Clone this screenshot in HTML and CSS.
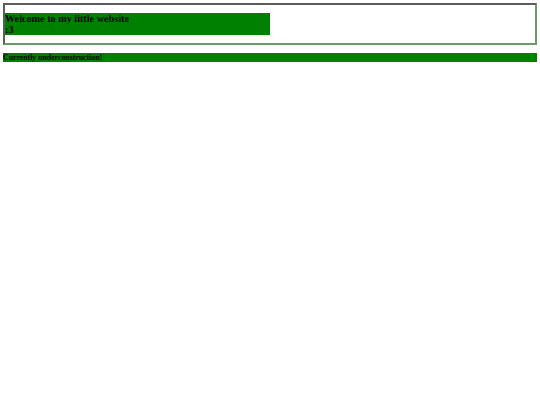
FILE: index.html
```html
<!DOCTYPE html>
<html>
<head>
<meta charset="utf-8">
<link rel="stylesheet" href="styles.css">
</head>
<body>
<div class="header">
  <h3 class="title">Welcome to my little website<br>:3</h3>
</div>
<h6 class="notice">Currently underconstruction!</h6>
</body>
</html>
```
FILE: styles.css
```css
html, body {
  background: #ffffff;
}
body {
  margin: 3px;
  font-family: "Liberation Serif", "Times New Roman", serif;
  color: #000000;
}
.header {
  border-style: solid;
  border-width: 2px;
  border-top-color: #5c5c5c;
  border-left-color: #5c5c5c;
  border-right-color: #6a9a6a;
  border-bottom-color: #6a9a6a;
}
.title {
  width: 50%;
  margin: 8px 0;
  background: #008000;
  font-size: 10.2px;
  line-height: 11px;
  font-weight: bold;
}
.notice {
  margin: 8px 0 0 0;
  background: #008000;
  font-size: 7.8px;
  line-height: 9px;
  font-weight: bold;
}
```
